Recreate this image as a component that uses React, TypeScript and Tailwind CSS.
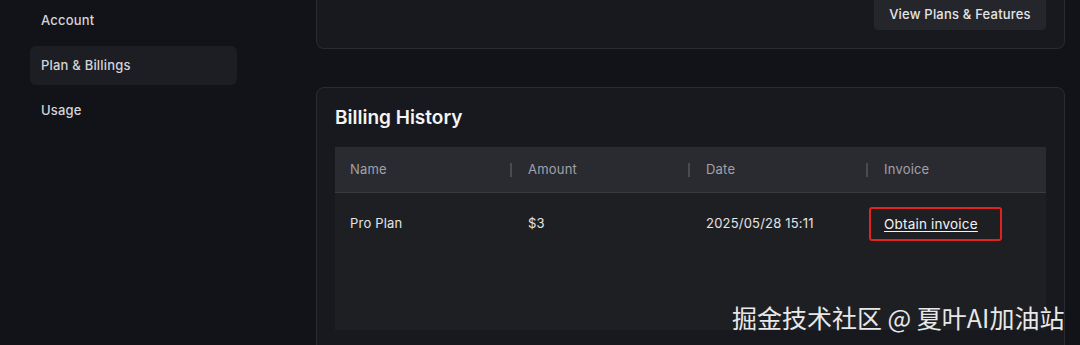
import React from "react";

const font = { fontFamily: "Inter, 'Noto Sans', sans-serif" };

const navItems = ["Account", "Plan & Billings", "Usage"];

const columns = ["Name", "Amount", "Date", "Invoice"];

export default function App() {
  return (
    <div
      className="relative w-[1080px] h-[345px] overflow-hidden bg-[#121318] flex"
      style={font}
    >
      {/* Sidebar */}
      <aside className="w-[316px] shrink-0 pl-[30px] pt-[1px] flex flex-col gap-[6px]">
        {navItems.map((item) => (
          <div
            key={item}
            className={
              item === "Plan & Billings"
                ? "w-[207px] h-[39px] shrink-0 flex items-center pl-[11px] rounded-md bg-[#1d1e23] text-[13px] font-medium tracking-[0.2px] text-[#d4d4d8]"
                : "w-[207px] h-[39px] shrink-0 flex items-center pl-[11px] rounded-md text-[13px] font-medium tracking-[0.2px] text-[#d4d4d8]"
            }
          >
            {item}
          </div>
        ))}
      </aside>

      {/* Main */}
      <main className="w-[749px] flex flex-col gap-[38px]">
        <section className="h-[49px] shrink-0 border-x border-b border-[#2a2b31] rounded-b-lg bg-[#18191e] flex justify-end pr-[18px]">
          <button className="w-[172px] h-[30px] rounded-b bg-[#25262b] text-[13px] font-medium tracking-[0.2px] text-[#e4e4e7]">
            View Plans &amp; Features
          </button>
        </section>

        <section className="h-[280px] shrink-0 border border-[#2a2b31] rounded-lg bg-[#18191e] px-[18px] pt-[17px]">
          <h2 className="text-[19px] font-semibold text-[#f4f4f5] leading-[26px]">
            Billing History
          </h2>
          <div className="mt-[16px] w-[711px]">
            <div className="h-[46px] bg-[#2a2b30] border-b border-[#3a3b40] grid grid-cols-[178px_178px_178px_177px] items-center">
              {columns.map((c, i) => (
                <div key={c} className="flex items-center h-full">
                  <span className="pl-[15px] text-[13px] tracking-[0.2px] text-[#a1a1aa] flex-1">
                    {c}
                  </span>
                  {i < columns.length - 1 && (
                    <span className="w-[2px] h-[14px] bg-[#4a4b50] mr-[1px]" />
                  )}
                </div>
              ))}
            </div>
            <div className="h-[137px] bg-[#1e1f23]">
              <div className="h-[62px] grid grid-cols-[178px_178px_178px_177px] items-center text-[13px] tracking-[0.2px] text-[#e4e4e7]">
                <span className="pl-[15px]">Pro Plan</span>
                <span className="pl-[15px]">$3</span>
                <span className="pl-[15px]">2025/05/28 15:11</span>
                <span>
                  <span className="inline-flex items-center w-[133px] h-[34px] pl-[13px] border-2 border-[#e0231f] rounded-[3px]">
                    <a className="underline underline-offset-2 text-[13.5px] text-[#f4f4f5]">
                      Obtain invoice
                    </a>
                  </span>
                </span>
              </div>
            </div>
          </div>
        </section>
      </main>

      {/* Watermark */}
      <div
        className="absolute left-[732px] top-[301px] text-[25px] leading-[32px] text-[#e8e8e8] whitespace-nowrap"
        style={{ fontFamily: "'Noto Sans CJK SC', sans-serif" }}
      >
        掘金技术社区 @ 夏叶AI加油站
      </div>
    </div>
  );
}
